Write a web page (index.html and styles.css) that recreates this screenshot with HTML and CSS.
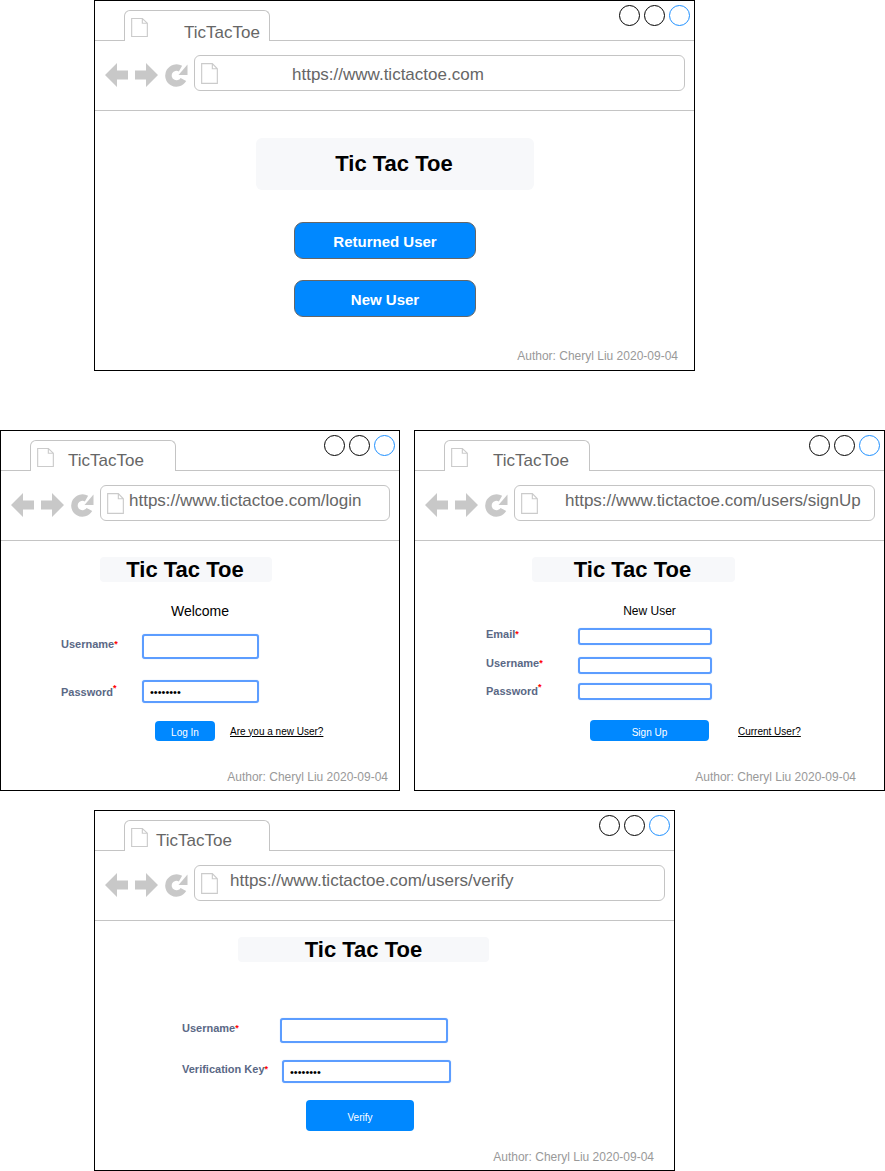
FILE: index.html
```html
<!DOCTYPE html>
<html lang="en">
<head>
    <meta charset="UTF-8">
    <title>TicTacToe wireframes</title>
    <link rel="stylesheet" href="styles.css">
</head>
<body>

<svg class="defs" width="0" height="0">
    <symbol id="doc" viewBox="0 0 18 22" preserveAspectRatio="none">
        <path d="M.7 .7H12L17.3 6V21.3H.7Z M12 .7V6H17.3" fill="#fff" stroke="#cbcbcb" stroke-width="1.2"/>
    </symbol>
    <symbol id="back" viewBox="0 0 24 24">
        <path d="M0 12L12 0V7.5H23V16.5H12V24Z" fill="#c8c8c8"/>
    </symbol>
    <symbol id="forward" viewBox="0 0 24 24">
        <path d="M23 12L11 0V7.5H0V16.5H11V24Z" fill="#c8c8c8"/>
    </symbol>
    <symbol id="reload" viewBox="0 0 24 24">
        <path d="M18.4 16.5A8 8 0 1 1 15.5 5.6" fill="none" stroke="#c8c8c8" stroke-width="6.5"/>
        <path d="M22.5 1.5V12H13.5Z" fill="#c8c8c8"/>
    </symbol>
</svg>

<main class="desktop">

    <!-- start page -->
    <section class="window window-home">
        <div class="tabstrip">
            <div class="tab">
                <svg class="tab-doc"><use href="#doc"/></svg>
                <span class="tab-title">TicTacToe</span>
            </div>
            <div class="dots"><i></i><i></i><i class="dot-blue"></i></div>
        </div>
        <div class="toolbar">
            <div class="nav-icons">
                <svg><use href="#back"/></svg>
                <svg><use href="#forward"/></svg>
                <svg><use href="#reload"/></svg>
            </div>
            <div class="address">
                <svg class="address-doc"><use href="#doc"/></svg>
                <span class="url">https://www.tictactoe.com</span>
            </div>
        </div>
        <div class="content">
            <h1 class="title">Tic Tac Toe</h1>
            <button class="big-btn first">Returned User</button>
            <button class="big-btn">New User</button>
            <p class="author">Author: Cheryl Liu 2020-09-04</p>
        </div>
    </section>

    <div class="window-row">
        <!-- login -->
        <section class="window window-login">
            <div class="tabstrip">
                <div class="tab">
                    <svg class="tab-doc"><use href="#doc"/></svg>
                    <span class="tab-title">TicTacToe</span>
                </div>
                <div class="dots"><i></i><i></i><i class="dot-blue"></i></div>
            </div>
            <div class="toolbar">
                <div class="nav-icons">
                    <svg><use href="#back"/></svg>
                    <svg><use href="#forward"/></svg>
                    <svg><use href="#reload"/></svg>
                </div>
                <div class="address">
                    <svg class="address-doc"><use href="#doc"/></svg>
                    <span class="url">https://www.tictactoe.com/login</span>
                </div>
            </div>
            <div class="content">
                <h1 class="title">Tic Tac Toe</h1>
                <p class="greeting">Welcome</p>
                <div class="field field-a">
                    <label>Username<sup>*</sup></label>
                    <input type="text">
                </div>
                <div class="field field-b">
                    <label>Password<sup class="sup-high">*</sup></label>
                    <input type="password" value="12345678">
                </div>
                <div class="actions">
                    <button class="small-btn">Log In</button>
                    <a href="#">Are you a new User?</a>
                </div>
                <p class="author">Author: Cheryl Liu 2020-09-04</p>
            </div>
        </section>

        <!-- sign up -->
        <section class="window window-signup">
            <div class="tabstrip">
                <div class="tab">
                    <svg class="tab-doc"><use href="#doc"/></svg>
                    <span class="tab-title">TicTacToe</span>
                </div>
                <div class="dots"><i></i><i></i><i class="dot-blue"></i></div>
            </div>
            <div class="toolbar">
                <div class="nav-icons">
                    <svg><use href="#back"/></svg>
                    <svg><use href="#forward"/></svg>
                    <svg><use href="#reload"/></svg>
                </div>
                <div class="address">
                    <svg class="address-doc"><use href="#doc"/></svg>
                    <span class="url">https://www.tictactoe.com/users/signUp</span>
                </div>
            </div>
            <div class="content">
                <h1 class="title">Tic Tac Toe</h1>
                <p class="greeting">New User</p>
                <div class="field field-a">
                    <label>Email<sup>*</sup></label>
                    <input type="text">
                </div>
                <div class="field field-b">
                    <label>Username<sup>*</sup></label>
                    <input type="text">
                </div>
                <div class="field field-c">
                    <label>Password<sup class="sup-high">*</sup></label>
                    <input type="text">
                </div>
                <div class="actions">
                    <button class="small-btn">Sign Up</button>
                    <a href="#">Current User?</a>
                </div>
                <p class="author">Author: Cheryl Liu 2020-09-04</p>
            </div>
        </section>
    </div>

    <!-- verify -->
    <section class="window window-verify">
        <div class="tabstrip">
            <div class="tab">
                <svg class="tab-doc"><use href="#doc"/></svg>
                <span class="tab-title">TicTacToe</span>
            </div>
            <div class="dots"><i></i><i></i><i class="dot-blue"></i></div>
        </div>
        <div class="toolbar">
            <div class="nav-icons">
                <svg><use href="#back"/></svg>
                <svg><use href="#forward"/></svg>
                <svg><use href="#reload"/></svg>
            </div>
            <div class="address">
                <svg class="address-doc"><use href="#doc"/></svg>
                <span class="url">https://www.tictactoe.com/users/verify</span>
            </div>
        </div>
        <div class="content">
            <h1 class="title">Tic Tac Toe</h1>
            <div class="field field-a">
                <label>Username<sup>*</sup></label>
                <input type="text">
            </div>
            <div class="field field-b">
                <label>Verification Key<sup>*</sup></label>
                <input type="password" value="12345678">
            </div>
            <div class="actions">
                <button class="small-btn">Verify</button>
            </div>
            <p class="author">Author: Cheryl Liu 2020-09-04</p>
        </div>
    </section>

</main>

</body>
</html>
```

FILE: styles.css
```css
* {
    box-sizing: border-box;
}

body {
    margin: 0;
    background: #fff;
    font-family: 'Liberation Sans', Arial, sans-serif;
    color: #000;
}

.defs {
    display: block;
    height: 0;
}

.desktop {
    display: flex;
    flex-direction: column;
    width: 885px;
    height: 1171px;
}

.window {
    display: flex;
    flex-direction: column;
    border: 1px solid #000;
    background: #fff;
    height: 361px;
}

.window-row {
    display: flex;
    gap: 14px;
    margin-top: 59px;
}

.window-home {
    width: 601px;
    height: 371px;
    margin-left: 94px;
}

.window-login {
    width: 400px;
    height: 361px;
}

.window-signup {
    width: 471px;
    height: 361px;
}

.window-verify {
    width: 581px;
    margin-top: 19px;
    margin-left: 94px;
}

/* browser chrome */
.tabstrip {
    display: flex;
    justify-content: space-between;
    height: 40px;
    padding: 9px 4px 0 29px;
    border-bottom: 1px solid #c4c4c4;
}

.tab {
    display: flex;
    width: 146px;
    height: 31px;
    padding: 7px 0 0 6px;
    background: #fff;
    border: 1px solid #c4c4c4;
    border-bottom: none;
    border-radius: 6px 6px 0 0;
}

.tab-doc {
    width: 17px;
    height: 19px;
    flex-shrink: 0;
}

.tab-title {
    margin-top: 4px;
    font-size: 17px;
    line-height: 18px;
    color: #666;
}

.window-home .tab-title {
    margin-top: 6px;
    margin-left: 36px;
}

.window-login .tab-title {
    margin-left: 14px;
}

.window-signup .tab-title {
    margin-left: 25px;
}

.window-verify .tab-title {
    margin-left: 8px;
}

.dots {
    display: flex;
    gap: 4px;
    margin-top: -5px;
}

.dots i {
    display: block;
    width: 21px;
    height: 21px;
    border: 1px solid #000;
    border-radius: 50%;
}

.dots .dot-blue {
    border-color: #1e90ff;
}

.toolbar {
    display: flex;
    align-items: center;
    height: 70px;
    padding: 0 9px 5px 10px;
    border-bottom: 1px solid #c4c4c4;
}

.nav-icons {
    display: flex;
    gap: 6px;
    margin-top: 4px;
    margin-right: 5px;
}

.nav-icons svg {
    width: 24px;
    height: 24px;
}

.address {
    display: flex;
    flex: 1;
    height: 36px;
    padding: 7px 0 0 6px;
    border: 1px solid #c4c4c4;
    border-radius: 6px;
}

.address-doc {
    width: 17px;
    height: 21px;
    flex-shrink: 0;
}

.url {
    font-size: 17px;
    line-height: 18px;
    color: #666;
    white-space: nowrap;
}

.window-home .url {
    margin-top: 3px;
    margin-left: 74px;
}

.window-login .url {
    margin-top: -1px;
    margin-left: 5px;
}

.window-signup .url {
    margin-top: -1px;
    margin-left: 27px;
}

.window-verify .url {
    margin-top: -1px;
    margin-left: 12px;
}

/* page content */
.content {
    display: flex;
    flex-direction: column;
    align-items: flex-start;
    flex: 1;
}

.title {
    margin: 16px 0 0;
    height: 25px;
    padding-right: 2px;
    border-radius: 4px;
    background: #f7f8fa;
    font-size: 22px;
    line-height: 25px;
    font-weight: bold;
    text-align: center;
}

.window-home .title {
    width: 278px;
    height: 52px;
    margin-top: 27px;
    margin-left: 161px;
    border-radius: 6px;
    line-height: 52px;
}

.window-login .title {
    width: 172px;
    margin-left: 99px;
}

.window-signup .title {
    width: 203px;
    margin-left: 117px;
}

.window-verify .title {
    width: 251px;
    margin-left: 143px;
    padding-right: 0;
}

.big-btn {
    width: 182px;
    height: 37px;
    margin-top: 21px;
    margin-left: 199px;
    padding: 2px 0 0;
    border: 1px solid #666;
    border-radius: 9px;
    background: #0088ff;
    color: #fff;
    font: bold 15px 'Liberation Sans', Arial, sans-serif;
}

.big-btn.first {
    margin-top: 32px;
}

.greeting {
    width: 100%;
    margin: 21px 0 0;
    font-size: 14px;
    line-height: 16px;
    text-align: center;
}

.window-signup .greeting {
    margin: 21px 0 -1px;
    font-size: 12px;
}

.field {
    display: flex;
    align-items: flex-start;
}

.field label {
    flex-shrink: 0;
    font-size: 11px;
    font-weight: bold;
    line-height: 13px;
    color: #5a6885;
}

.field sup {
    font-size: 9px;
    line-height: 0;
    color: #f00;
    vertical-align: 1px;
}

.field .sup-high {
    vertical-align: 5px;
}

.field input {
    height: 25px;
    padding: 0 6px;
    border: 2px solid #5c9dff;
    border-radius: 3px;
    background: #fff;
    box-shadow: 0 0 1px rgba(92, 157, 255, 0.6);
    font: 11px 'Liberation Sans', Arial, sans-serif;
    outline: none;
}

/* login */
.window-login .field {
    margin-left: 60px;
}

.window-login label {
    width: 81px;
}

.window-login input {
    width: 117px;
}

.window-login .field-a {
    margin-top: 15px;
}

.window-login .field-a label {
    margin-top: 4px;
}

.window-login .field-b {
    margin-top: 21px;
}

.window-login .field-b label {
    margin-top: 6px;
}

.window-login .field-b input {
    height: 23px;
}

/* sign up */
.window-signup .field {
    margin-left: 71px;
}

.window-signup label {
    width: 92px;
}

.window-signup input {
    width: 134px;
    height: 17px;
}

.window-signup .field-a {
    margin-top: 10px;
}

.window-signup .field-b {
    margin-top: 12px;
}

.window-signup .field-c {
    margin-top: 9px;
}

.window-signup .field-c label {
    margin-top: 2px;
}

/* verify */
.window-verify .field {
    margin-left: 87px;
}

.window-verify .field-a {
    margin-top: 56px;
}

.window-verify .field-a label {
    width: 98px;
    margin-top: 4px;
}

.window-verify .field-a input {
    width: 168px;
}

.window-verify .field-b {
    margin-top: 17px;
}

.window-verify .field-b label {
    width: 100px;
    margin-top: 3px;
}

.window-verify .field-b input {
    width: 169px;
    height: 23px;
}

/* buttons + links under the forms */
.actions {
    display: flex;
    align-items: center;
}

.actions a {
    font-size: 10px;
    color: #000;
}

.small-btn {
    padding: 2px 0 0;
    border: none;
    border-radius: 4px;
    background: #0088ff;
    color: #fff;
    font: 10px 'Liberation Sans', Arial, sans-serif;
}

.window-login .actions {
    gap: 15px;
    margin-top: 18px;
    margin-left: 154px;
}

.window-login .small-btn {
    width: 60px;
    height: 20px;
}

.window-signup .actions {
    gap: 29px;
    margin-top: 20px;
    margin-left: 175px;
}

.window-signup .actions a {
    margin-top: 1px;
}

.window-signup .small-btn {
    width: 119px;
    height: 21px;
    padding-top: 3px;
}

.window-verify .actions {
    margin-top: 17px;
    margin-left: 211px;
}

.window-verify .small-btn {
    width: 108px;
    height: 31px;
    padding-top: 4px;
}

.author {
    align-self: flex-end;
    margin: auto 0 0;
    padding-bottom: 6px;
    font-size: 12px;
    line-height: 14px;
    color: #999;
}

.window-home .author {
    padding-right: 16px;
    padding-bottom: 7px;
}

.window-login .author {
    padding-right: 11px;
}

.window-signup .author {
    padding-right: 28px;
}

.window-verify .author {
    padding-right: 20px;
}
```
